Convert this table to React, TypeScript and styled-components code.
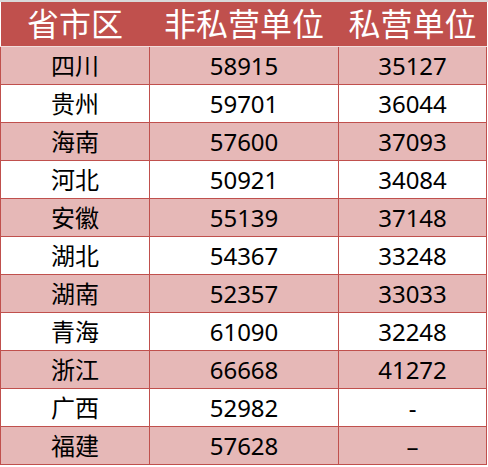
import styled, { createGlobalStyle } from "styled-components";

const GlobalStyle = createGlobalStyle`
    body {
        margin: 0;
        background: #ffffff;
    }
`;

const SdivFrame = styled.div`
    width: 488px;
    height: 467px;
    box-sizing: border-box;
    border-top: 2px solid #d9d9d9;
    background: #ffffff;
`;

const Stable = styled.table`
    width: 486px;
    border-collapse: collapse;
    table-layout: fixed;
    font-family: "Noto Sans", "Noto Sans CJK SC", sans-serif;
`;

const SthHead = styled.th`
    height: 44px;
    padding: 0;
    background: #c0504d;
    color: #ffffff;
    font-size: 32px;
    font-weight: 400;
    line-height: 1;
    text-align: center;
    border-bottom: 1px solid #f2dcdb;
`;

const StrRow = styled.tr<{ $striped: boolean }>`
    height: 38px;
    background: ${(p) => (p.$striped ? "#e6b8b7" : "#ffffff")};
`;

const StdCell = styled.td`
    padding: 0;
    border: 1px solid #c0504d;
    color: #000000;
    font-size: 24px;
    line-height: 1;
    text-align: center;
`;

const rows: [string, string, string][] = [
    ["四川", "58915", "35127"],
    ["贵州", "59701", "36044"],
    ["海南", "57600", "37093"],
    ["河北", "50921", "34084"],
    ["安徽", "55139", "37148"],
    ["湖北", "54367", "33248"],
    ["湖南", "52357", "33033"],
    ["青海", "61090", "32248"],
    ["浙江", "66668", "41272"],
    ["广西", "52982", "-"],
    ["福建", "57628", "–"],
];

const App = () => {
    return (
        <>
            <GlobalStyle />
            <SdivFrame>
                <Stable>
                    <colgroup>
                        <col style={{ width: 149 }} />
                        <col style={{ width: 189 }} />
                        <col style={{ width: 148 }} />
                    </colgroup>
                    <thead>
                        <tr>
                            <SthHead>省市区</SthHead>
                            <SthHead>非私营单位</SthHead>
                            <SthHead>私营单位</SthHead>
                        </tr>
                    </thead>
                    <tbody>
                        {rows.map((r, i) => (
                            <StrRow key={r[0]} $striped={i % 2 === 0}>
                                <StdCell>{r[0]}</StdCell>
                                <StdCell>{r[1]}</StdCell>
                                <StdCell>{r[2]}</StdCell>
                            </StrRow>
                        ))}
                    </tbody>
                </Stable>
            </SdivFrame>
        </>
    );
};

export default App;
